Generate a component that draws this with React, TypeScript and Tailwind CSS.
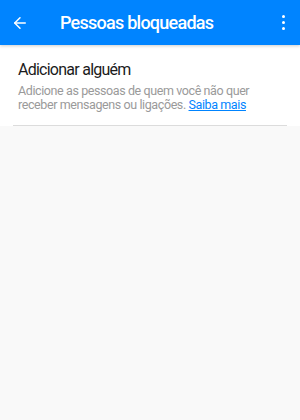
import { ArrowLeft } from "lucide-react";

export default function App() {
  return (
    <div className="flex h-[420px] w-[300px] flex-col bg-[#f9f9f9] font-['Roboto',sans-serif]">
      <header className="relative z-10 flex h-[45px] shrink-0 items-center bg-[#0084ff] shadow-[0_1px_3px_rgba(0,0,0,0.2)]">
        <button type="button" className="ml-[8px] flex h-6 w-6 items-center justify-center text-white">
          <ArrowLeft className="h-[18px] w-[18px]" strokeWidth={2} />
        </button>
        <h1 className="ml-[28px] flex-1 text-[18px] font-medium leading-none tracking-[-0.75px] text-white">
          Pessoas bloqueadas
        </h1>
        <div className="mr-[15px] flex flex-col items-center gap-[3px]">
          <span className="block h-[3px] w-[3px] rounded-full bg-white" />
          <span className="block h-[3px] w-[3px] rounded-full bg-white" />
          <span className="block h-[3px] w-[3px] rounded-full bg-white" />
        </div>
      </header>
      <section className="bg-white px-[13px]">
        <div className="border-b border-[#dcdcdc] px-[5px] pb-[13px] pt-[15px]">
          <h2 className="text-[16px] leading-[20px] tracking-[-0.75px] text-[#1b1b1b]">Adicionar alguém</h2>
          <p className="mt-[4px] text-[12.5px] leading-[14px] tracking-[-0.4px] text-[#9a9a9a]">
            Adicione as pessoas de quem você não quer receber mensagens ou ligações.{" "}
            <a href="#" className="text-[#0084ff] underline">Saiba mais</a>
          </p>
        </div>
      </section>
    </div>
  );
}
